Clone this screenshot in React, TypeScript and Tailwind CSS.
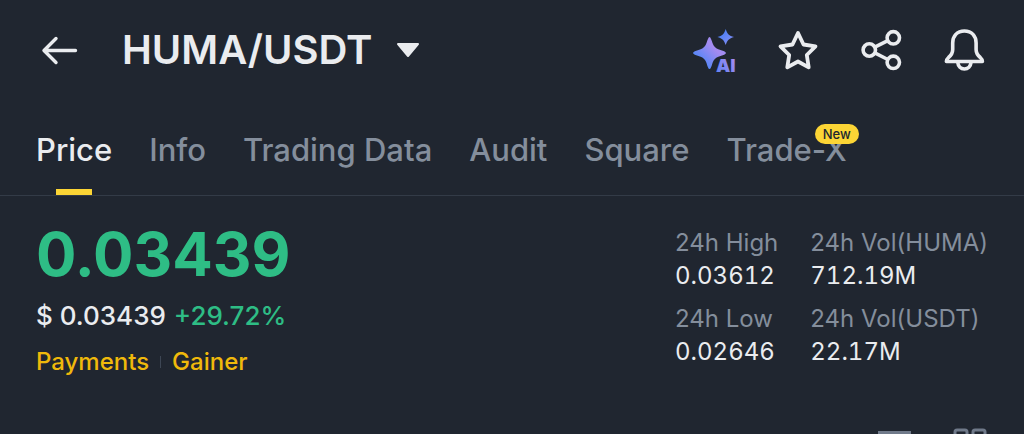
import { useState } from 'react';

type Tab = {
  label: string;
  badge?: string;
};

type Stat = {
  label: string;
  value: string;
};

const tabs: Tab[] = [
  { label: 'Price' },
  { label: 'Info' },
  { label: 'Trading Data' },
  { label: 'Audit' },
  { label: 'Square' },
  { label: 'Trade-X', badge: 'New' },
];

const stats: Stat[] = [
  { label: '24h High', value: '0.03612' },
  { label: '24h Vol(HUMA)', value: '712.19M' },
  { label: '24h Low', value: '0.02646' },
  { label: '24h Vol(USDT)', value: '22.17M' },
];

const BackIcon = () => (
  <svg viewBox="0 0 48 48" className="size-12" fill="none" stroke="currentColor" strokeWidth="3.4" strokeLinecap="round" strokeLinejoin="round">
    <path d="M39.5 24.5H8M20 12.5L8 24.5L20 36.5" />
  </svg>
);

const AiIcon = () => (
  <svg viewBox="0 0 48 48" className="size-12 overflow-visible">
    <defs>
      <linearGradient id="ai-star" x1="0" y1="1" x2="1" y2="0">
        <stop offset="0.2" stopColor="#4f86f7" />
        <stop offset="0.65" stopColor="#a58bf0" />
        <stop offset="1" stopColor="#8f8cf2" />
      </linearGradient>
      <linearGradient id="ai-star-small" x1="0" y1="0" x2="1" y2="1">
        <stop offset="0.2" stopColor="#4a7ff5" />
        <stop offset="0.8" stopColor="#7d8cf5" />
      </linearGradient>
      <linearGradient id="ai-text" x1="0" y1="1" x2="1" y2="0">
        <stop offset="0" stopColor="#5b83f2" />
        <stop offset="1" stopColor="#b08cf0" />
      </linearGradient>
    </defs>
    <path fill="url(#ai-star)" d="M18.5 11C19.6 11 20.5 14 21.5 17C22.6 20.5 24.500 22.3 28 23.500C32.5 25 35 25.8 35 27C35 28.2 32.5 29 28 30.500C24.5 31.7 22.6 33.5 21.5 37C20.3 41 19.6 43 18.5 43C17.4 43 16.7 41 15.5 37C14.4 33.5 12.5 31.7 9 30.500C4.5 29 2 28.2 2 27C2 25.8 4.5 25 9 23.500C12.5 22.3 14.4 20.5 15.5 17C16.5 14 17.4 11 18.5 11Z" />
    <path fill="url(#ai-star-small)" d="M34.7 3C36.3 8 38 9.7 43 11C38 12.3 36.3 14.5 34.7 19C33.1 14.5 31.4 12.3 26.4 11C31.4 9.7 33.1 8 34.7 3Z" />
    <text x="25" y="46" fontSize="18" fontWeight="900" fill="url(#ai-text)" stroke="#202630" strokeWidth="3" paintOrder="stroke">
      AI
    </text>
  </svg>
);

const StarIcon = () => (
  <svg viewBox="0 0 48 48" className="size-12" fill="none" stroke="currentColor" strokeWidth="3.8" strokeLinejoin="round">
    <path d="M24 7L29.5 18.5L41.5 20.3L32.8 29L34.7 41.3L24 35.5L13.3 41.3L15.2 29L6.5 20.3L18.5 18.5Z" />
  </svg>
);

const ShareIcon = () => (
  <svg viewBox="0 0 48 48" className="size-12" fill="none" stroke="currentColor" strokeWidth="3.6">
    <circle cx="12.3" cy="24" r="6.2" />
    <circle cx="36.3" cy="11.8" r="6.2" />
    <circle cx="36.3" cy="36.3" r="6.2" />
    <path d="M17.8 21.2L30.8 14.6M17.8 26.9L30.8 33.5" />
  </svg>
);

const BellIcon = () => (
  <svg viewBox="0 0 48 48" className="size-12" fill="none" stroke="currentColor" strokeWidth="3.6" strokeLinejoin="round">
    <path d="M24.4 5C17 5 12.7 10 12.7 17V23.5C12.7 27.5 11 29.5 8.5 31.5C6.8 33 6.4 33.5 6.4 35.5H42.4C42.4 33.5 42 33 40.3 31.5C37.8 29.5 36.1 27.5 36.1 23.5V17C36.1 10 31.8 5 24.4 5Z" />
    <path d="M17.8 36.5C18.2 40.5 20.8 43 24.4 43C28 43 30.6 40.5 31 36.5" />
  </svg>
);

const App = () => {
  const [activeTab, setActiveTab] = useState('Price');

  return (
    <div className="h-screen overflow-hidden bg-[#202630] font-['Inter',sans-serif] text-[#eaecef]">
      <header className="flex h-[100px] items-center justify-between px-9">
        <div className="flex items-center">
          <button type="button" aria-label="Back">
            <BackIcon />
          </button>
          <button type="button" className="ml-[38px] flex items-center gap-6 text-[40px] leading-none font-semibold">
            HUMA/USDT
            <svg viewBox="0 0 24 18" className="h-[18px] w-6" fill="currentColor" stroke="currentColor" strokeWidth="2" strokeLinejoin="round">
              <path d="M2 3H22L12 15Z" />
            </svg>
          </button>
        </div>
        <div className="flex items-center gap-[35px]">
          <button type="button" aria-label="AI"><AiIcon /></button>
          <button type="button" aria-label="Favorite"><StarIcon /></button>
          <button type="button" aria-label="Share"><ShareIcon /></button>
          <button type="button" aria-label="Alerts"><BellIcon /></button>
        </div>
      </header>

      <nav className="flex h-24 gap-[37px] border-b border-[#333b47] px-9">
        {tabs.map((tab) => (
          <button
            key={tab.label}
            type="button"
            onClick={() => setActiveTab(tab.label)}
            className={`relative flex flex-col items-center justify-between pt-[30px] text-[31px] leading-10 font-medium whitespace-nowrap ${
              activeTab === tab.label ? 'text-[#eaecef]' : 'text-[#848e9c]'
            }`}
          >
            {tab.label}
            {tab.badge && (
              <span className="absolute top-6 -right-3 rounded-full bg-[#fcd535] px-2 text-[13px] leading-5 font-medium text-[#202630]">
                {tab.badge}
              </span>
            )}
            {activeTab === tab.label && <span className="h-1.5 w-9 bg-[#fcd535]" />}
          </button>
        ))}
      </nav>

      <main className="flex items-start justify-between px-9 pt-6">
        <div>
          <h1 className="text-[60px] leading-[68px] font-bold text-[#2ebd85]">0.03439</h1>
          <p className="mt-2 flex gap-2 text-[26px] leading-10 font-medium">
            <span>$ 0.03439</span>
            <span className="text-[#2ebd85]">+29.72%</span>
          </p>
          <div className="mt-2 flex items-center gap-[11px] text-2xl leading-9 font-medium text-[#f0b90b]">
            <a href="#payments">Payments</a>
            <span className="h-3 w-px bg-[#3d4654]" />
            <a href="#gainer">Gainer</a>
          </div>
        </div>
        <dl className="grid grid-cols-[auto_auto] gap-x-8 gap-y-2.5 pt-1.5 text-2xl">
          {stats.map((stat) => (
            <div key={stat.label}>
              <dt className="leading-[34px] text-[#848e9c]">{stat.label}</dt>
              <dd className="leading-8 tabular-nums">{stat.value}</dd>
            </div>
          ))}
        </dl>
      </main>

      <div className="mt-[45px] flex justify-end gap-10 px-9 text-[#707a8a]">
        <button type="button" aria-label="List view">
          <svg viewBox="0 0 36 36" className="size-9" fill="none" stroke="currentColor" strokeWidth="4">
            <path d="M2 8H35M2 19H35M2 30H35" />
          </svg>
        </button>
        <button type="button" aria-label="Grid view">
          <svg viewBox="0 0 36 36" className="size-9" fill="none" stroke="currentColor" strokeWidth="3">
            <rect x="3" y="5" width="12" height="12" rx="2" />
            <rect x="21" y="5" width="12" height="12" rx="2" />
            <rect x="3" y="23" width="12" height="12" rx="2" />
            <rect x="21" y="23" width="12" height="12" rx="2" />
          </svg>
        </button>
      </div>
    </div>
  );
};

export default App;
